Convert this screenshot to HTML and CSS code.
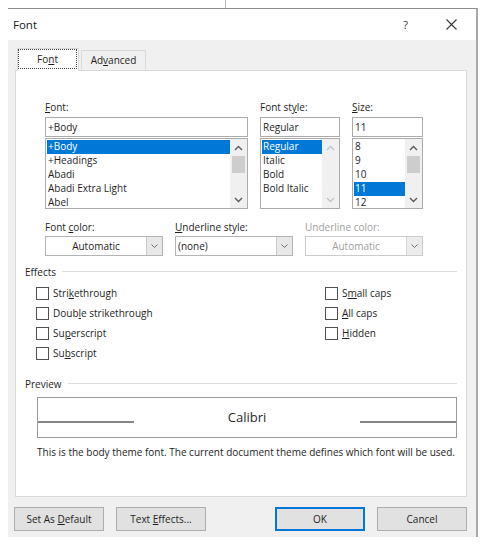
FILE: index.html
```html
<!DOCTYPE html>
<html>
<head>
<meta charset="utf-8">
<title>Font</title>
<link rel="stylesheet" href="styles.css">
</head>
<body>
<div class="backdrop"><div class="tick"></div></div>
<div class="window">
  <div class="titlebar">
    <span class="title">Font</span>
    <span class="help">?</span>
    <svg class="close" width="11" height="11" viewBox="0 0 11 11"><path d="M0.5 0.5 L10.5 10.5 M10.5 0.5 L0.5 10.5" stroke="#3a3a3a" stroke-width="1.1" fill="none"/></svg>
  </div>
  <div class="dlgbody">
    <div class="tabs">
      <div class="tab active"><span class="focus">Fo<u>n</u>t</span></div>
      <div class="tab">Ad<u>v</u>anced</div>
    </div>
    <div class="panel">
      <div class="fontgrid">
        <div class="col col-font">
          <div class="label"><u>F</u>ont:</div>
          <div class="input">+Body</div>
          <div class="list">
            <div class="items">
              <div class="item sel">+Body</div>
              <div class="item">+Headings</div>
              <div class="item">Abadi</div>
              <div class="item">Abadi Extra Light</div>
              <div class="item">Abel</div>
            </div>
            <div class="scroll">
              <div class="arrow"><svg width="9" height="6" viewBox="0 0 9 6"><path d="M1 5 L4.5 1.5 L8 5" stroke="#5a5a5a" stroke-width="1.4" fill="none"/></svg></div>
              <div class="track"><div class="thumb"></div></div>
              <div class="arrow"><svg width="9" height="6" viewBox="0 0 9 6"><path d="M1 1 L4.5 4.5 L8 1" stroke="#5a5a5a" stroke-width="1.4" fill="none"/></svg></div>
            </div>
          </div>
        </div>
        <div class="col col-style">
          <div class="label">Font st<u>y</u>le:</div>
          <div class="input">Regular</div>
          <div class="list">
            <div class="items">
              <div class="item sel">Regular</div>
              <div class="item">Italic</div>
              <div class="item">Bold</div>
              <div class="item">Bold Italic</div>
            </div>
            <div class="scroll">
              <div class="arrow"><svg width="9" height="6" viewBox="0 0 9 6"><path d="M1 5 L4.5 1.5 L8 5" stroke="#c4c4c4" stroke-width="1.4" fill="none"/></svg></div>
              <div class="track"></div>
              <div class="arrow"><svg width="9" height="6" viewBox="0 0 9 6"><path d="M1 1 L4.5 4.5 L8 1" stroke="#c4c4c4" stroke-width="1.4" fill="none"/></svg></div>
            </div>
          </div>
        </div>
        <div class="col col-size">
          <div class="label"><u>S</u>ize:</div>
          <div class="input">11</div>
          <div class="list">
            <div class="items">
              <div class="item">8</div>
              <div class="item">9</div>
              <div class="item">10</div>
              <div class="item sel">11</div>
              <div class="item">12</div>
            </div>
            <div class="scroll">
              <div class="arrow"><svg width="9" height="6" viewBox="0 0 9 6"><path d="M1 5 L4.5 1.5 L8 5" stroke="#5a5a5a" stroke-width="1.4" fill="none"/></svg></div>
              <div class="track"><div class="thumb"></div></div>
              <div class="arrow"><svg width="9" height="6" viewBox="0 0 9 6"><path d="M1 1 L4.5 4.5 L8 1" stroke="#5a5a5a" stroke-width="1.4" fill="none"/></svg></div>
            </div>
          </div>
        </div>
      </div>

      <div class="colorrow">
        <div class="ccol">
          <div class="label">Font <u>c</u>olor:</div>
          <div class="combo">
            <div class="cvalue center">Automatic</div>
            <div class="drop"><svg width="7" height="4" viewBox="0 0 7 4"><path d="M0.5 0.5 L3.5 3.5 L6.5 0.5" stroke="#6e6e6e" stroke-width="1" fill="none"/></svg></div>
          </div>
        </div>
        <div class="ccol">
          <div class="label"><u>U</u>nderline style:</div>
          <div class="combo">
            <div class="cvalue">(none)</div>
            <div class="drop"><svg width="7" height="4" viewBox="0 0 7 4"><path d="M0.5 0.5 L3.5 3.5 L6.5 0.5" stroke="#6e6e6e" stroke-width="1" fill="none"/></svg></div>
          </div>
        </div>
        <div class="ccol disabled">
          <div class="label">Underline color:</div>
          <div class="combo">
            <div class="cvalue center">Automatic</div>
            <div class="drop"><svg width="7" height="4" viewBox="0 0 7 4"><path d="M0.5 0.5 L3.5 3.5 L6.5 0.5" stroke="#6e6e6e" stroke-width="1" fill="none"/></svg></div>
          </div>
        </div>
      </div>

      <div class="sechead effects-head"><span>Effects</span><div class="rule"></div></div>
      <div class="checks">
        <div class="chk"><span class="box"></span>Stri<u>k</u>ethrough</div>
        <div class="chk"><span class="box"></span>S<u>m</u>all caps</div>
        <div class="chk"><span class="box"></span>Doub<u>l</u>e strikethrough</div>
        <div class="chk"><span class="box"></span><u>A</u>ll caps</div>
        <div class="chk"><span class="box"></span>Su<u>p</u>erscript</div>
        <div class="chk"><span class="box"></span><u>H</u>idden</div>
        <div class="chk"><span class="box"></span>Su<u>b</u>script</div>
      </div>

      <div class="sechead preview-head"><span>Preview</span><div class="rule"></div></div>
      <div class="preview">
        <div class="pline"></div>
        <div class="ptext">Calibri</div>
        <div class="pline"></div>
      </div>
      <div class="desc">This is the body theme font. The current document theme defines which font will be used.</div>
    </div>
    <div class="buttons">
      <div class="bgroup">
        <div class="btn">Set As <u>D</u>efault</div>
        <div class="btn">Text <u>E</u>ffects...</div>
      </div>
      <div class="bgroup">
        <div class="btn default">OK</div>
        <div class="btn">Cancel</div>
      </div>
    </div>
  </div>
</div>
</body>
</html>
```
FILE: styles.css
```css
* { box-sizing: border-box; }
html, body { margin: 0; padding: 0; background: #ffffff; }
body {
  font-family: "Open Sans", "Noto Sans", sans-serif;
  font-size: 10px;
  color: #1e1e1e;
  width: 494px;
  height: 546px;
  overflow: hidden;
}
u { text-decoration: underline; text-underline-offset: 1px; text-decoration-thickness: 1px; }

.backdrop { height: 8px; padding-left: 225px; }
.tick { width: 1px; height: 8px; background: #b8b8b8; }

.window {
  margin-left: 8px;
  width: 470px;
  border-top: 1px solid #8e8e8e;
  border-right: 2px solid #a8a8a8;
}

.titlebar {
  height: 31px;
  background: #ffffff;
  display: flex;
  align-items: center;
  padding: 0 19px 0 5px;
}
.title { font-size: 11.5px; color: #1a1a1a; }
.help { margin-left: auto; margin-right: 38px; font-size: 11px; color: #333; }
.close { display: block; }

.dlgbody {
  background: #f0f0f0;
  height: 497px;
  padding-top: 8px;
}

.tabs {
  height: 22px;
  display: flex;
  align-items: flex-end;
  padding-left: 9px;
}
.tab {
  width: 65px;
  height: 20px;
  margin-left: 2px;
  border: 1px solid #d9d9d9;
  border-bottom: 0;
  background: #f0f0f0;
  text-align: center;
  line-height: 19px;
}
.tab.active {
  width: 62px;
  height: 23px;
  margin-left: 0;
  margin-bottom: -1px;
  background: #ffffff;
  position: relative;
  z-index: 1;
  padding: 0 1px 3px 0;
  line-height: normal;
}
.focus {
  display: block;
  height: 20px;
  border: 1px dotted #444;
  line-height: 18px;
  text-align: center;
}

.panel {
  margin-left: 7px;
  width: 452px;
  height: 427px;
  background: #ffffff;
  border: 1px solid #d9d9d9;
  padding: 29px 9px 0 9px;
}

.label { height: 15px; line-height: 15px; margin-bottom: 2px; white-space: nowrap; }

.fontgrid { margin-left: 20px; display: flex; gap: 12px; }
.col-font { width: 203px; }
.col-style { width: 80px; }
.col-size { width: 71px; }

.input {
  height: 20px;
  border: 1px solid #ababab;
  padding-left: 2px;
  line-height: 18px;
}
.list {
  margin-top: 1px;
  height: 71px;
  border: 1px solid #ababab;
  display: flex;
  overflow: hidden;
}
.items { flex: 1; padding: 1px 0 0 1px; overflow: hidden; }
.item { height: 14px; line-height: 13px; padding-left: 1px; white-space: nowrap; }
.item.sel { background: #0078d7; color: #ffffff; }

.scroll { width: 17px; background: #f0f0f0; display: flex; flex-direction: column; }
.arrow { height: 17px; display: flex; align-items: center; justify-content: center; }
.arrow svg { display: block; }
.track { flex: 1; }
.thumb { height: 17px; margin: 0 2px; background: #cdcdcd; }

.colorrow { margin-left: 20px; margin-top: 11px; display: flex; gap: 12px; }
.ccol { width: 118px; }
.ccol .label { margin-bottom: 1px; }
.combo {
  height: 20px;
  border: 1px solid #b4b4b4;
  display: flex;
  background: #ffffff;
}
.cvalue { flex: 1; line-height: 18px; padding-left: 2px; }
.cvalue.center { text-align: center; padding-left: 0; }
.drop {
  width: 16px;
  border-left: 1px solid #c9c9c9;
  background: #e8e8e8;
  display: flex;
  align-items: center;
  justify-content: center;
}
.drop svg { display: block; }
.disabled .label, .disabled .cvalue { color: #a0a0a0; }
.disabled .combo { border-color: #cccccc; }
.disabled .drop { border-left-color: #d4d4d4; background: #ececec; }

.sechead { height: 15px; display: flex; align-items: center; }
.sechead .rule { flex: 1; height: 1px; background: #dedede; margin-left: 6px; }
.effects-head { margin-top: 8px; }
.preview-head { margin-top: 13px; }

.checks {
  margin-top: 4px;
  margin-left: 11px;
  display: grid;
  grid-template-columns: 289px 1fr;
  grid-auto-rows: 20px;
}
.chk { display: flex; align-items: center; white-space: nowrap; }
.box {
  width: 13px;
  height: 13px;
  border: 1px solid #505050;
  background: #ffffff;
  margin-right: 4px;
  flex: none;
}

.preview {
  margin-top: 6px;
  margin-left: 12px;
  width: 420px;
  height: 41px;
  border: 1px solid #9a9a9a;
  display: flex;
  align-items: flex-start;
}
.pline { width: 96px; height: 2px; margin-top: 23px; background: #858585; }
.ptext { flex: 1; text-align: center; line-height: 39px; font-size: 13px; color: #2a2a2a; }

.desc { margin-top: 7px; margin-left: 12px; line-height: 15px; white-space: nowrap; }

.buttons {
  margin-top: 10px;
  padding: 0 9px 0 6px;
  display: flex;
  justify-content: space-between;
}
.bgroup { display: flex; gap: 12px; }
.btn {
  width: 90px;
  height: 24px;
  background: #e1e1e1;
  border: 1px solid #adadad;
  text-align: center;
  line-height: 22px;
}
.btn.default { border: 2px solid #0078d7; line-height: 20px; }
```
